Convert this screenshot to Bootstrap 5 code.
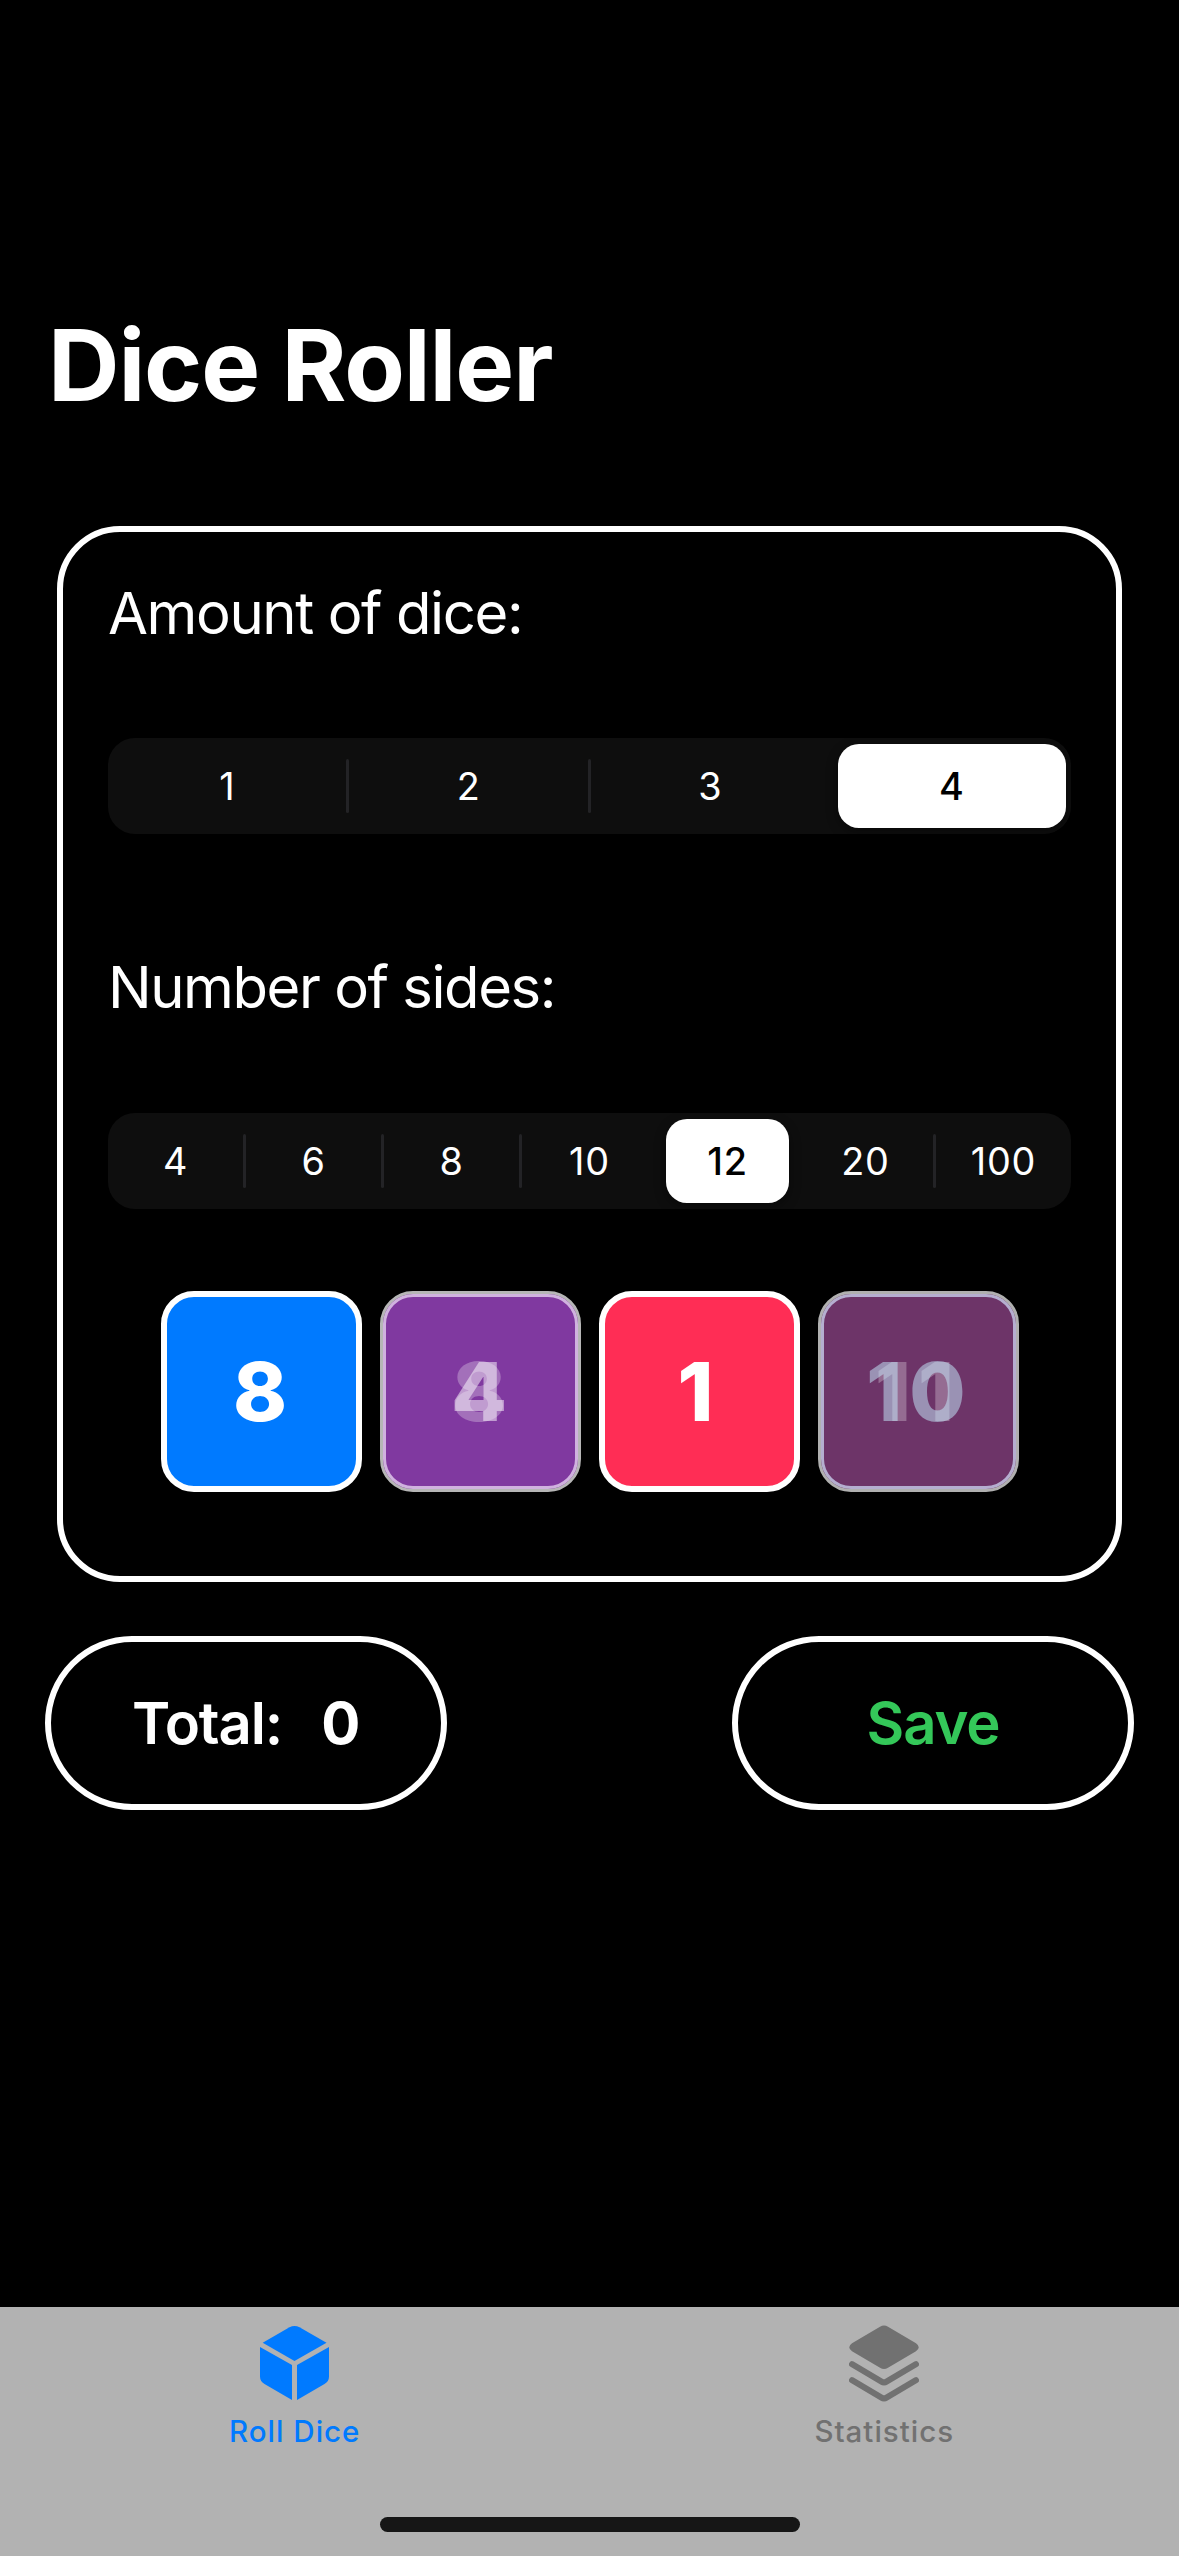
<!DOCTYPE html>
<html lang="en" data-bs-theme="dark">
<head>
<meta charset="utf-8">
<meta name="viewport" content="width=device-width, initial-scale=1">
<title>Dice Roller</title>
<link href="https://cdn.jsdelivr.net/npm/bootstrap@5.3.0/dist/css/bootstrap.min.css" rel="stylesheet">
<style>
body{font-family:Inter,"Liberation Sans",sans-serif;background:#000;color:#fff;height:2556px;overflow:hidden}
.app-title{font-size:99px;font-weight:700;line-height:100px;letter-spacing:-1.1px;padding:315px 0 0 48px;margin:0 0 111px}
.setup-card{margin:0 57px 54px;height:1056px;border:6px solid #fff;border-radius:63px;padding:51px 45px 0}
.field-label{font-size:58px;font-weight:400;line-height:60px;letter-spacing:-1.4px}
.label-sides{letter-spacing:-1.45px;margin-top:123px}
.segments{height:96px;border-radius:27px;background:#0e0e0e;margin-top:95px}
.segments.sides{margin-top:96px}
.track{margin:0 -1.5px;height:96px}
.seg{flex:1 1 0;min-width:0;position:relative;font-size:37.8px;line-height:96px;text-align:center;letter-spacing:.8px}
.split::after{content:"";position:absolute;right:-1px;top:21px;width:3px;height:54px;border-radius:2px;background:#232326}
.seg.active{color:#000;font-weight:500;padding:6px 0}
.thumb{display:block;margin:0 6.75px;background:#fff;line-height:84px;border-radius:21px;box-shadow:0 4px 12px rgba(0,0,0,.4)}
.sides .thumb{margin:0 7.5px}
.dice-row{gap:18px;margin-top:82px}
.die{position:relative;width:201px;height:201px;border:6px solid #fff;border-radius:33px;font-size:81.5px;font-weight:850;line-height:189px;text-align:center;flex:none}
.die-blue{background:#007aff;padding-right:2px}
.die-pink{background:#ff2d55;padding-right:7px}
.die-purple{background:#8039a0;border:3px solid #b6b6b6;box-shadow:inset 0 0 0 3px #d0b2df}
.die-plum{background:#6d3468;border:3px solid #b0b0b0;box-shadow:inset 0 0 0 3px #b5aed0;letter-spacing:7px}
.face{position:absolute;inset:3px}
.die-purple .face{padding-right:2px}
.face-old{color:rgba(255,255,255,.28)}
.face-new{color:rgba(255,255,255,.5)}
.die-plum .face-new{color:rgba(199,240,255,.5);left:6px}
.actions{margin:0 45px}
.pill{width:402px;height:174px;border:6px solid #fff;border-radius:87px;font-size:58px;font-weight:600;letter-spacing:-1.1px}
.total{padding-left:81px}
.total-value{margin-left:39px;font-weight:700}
.save{color:#34c759}
.tabs{height:249px;background:#b2b2b2}
.tab{font-size:29.5px;font-weight:450;line-height:34px;letter-spacing:1px;color:#717171;padding-top:18px}
.tab.current{color:#007aff}
.tab svg{margin-bottom:11px}
.home-bar{width:420px;height:15px;border-radius:8px;background:#161616;margin-bottom:24px}
</style>
</head>
<body class="d-flex flex-column">
<h1 class="app-title">Dice Roller</h1>
<main>
  <section class="setup-card">
    <h2 class="field-label m-0">Amount of dice:</h2>
    <div class="segments">
      <div class="track d-flex">
        <div class="seg split">1</div><div class="seg split">2</div><div class="seg">3</div><div class="seg active"><span class="thumb">4</span></div>
      </div>
    </div>
    <h2 class="field-label label-sides mb-0">Number of sides:</h2>
    <div class="segments sides">
      <div class="track d-flex">
        <div class="seg split">4</div><div class="seg split">6</div><div class="seg split">8</div><div class="seg">10</div><div class="seg active"><span class="thumb">12</span></div><div class="seg split">20</div><div class="seg">100</div>
      </div>
    </div>
    <div class="dice-row d-flex justify-content-center">
      <div class="die die-blue">8</div>
      <div class="die die-purple"><span class="face face-old">8</span><span class="face face-new">4</span></div>
      <div class="die die-pink">1</div>
      <div class="die die-plum"><span class="face face-old">11</span><span class="face face-new">10</span></div>
    </div>
  </section>
  <div class="actions d-flex justify-content-between">
    <div class="pill total d-flex align-items-center"><span>Total:</span><span class="total-value">0</span></div>
    <button type="button" class="btn pill save p-0">Save</button>
  </div>
</main>
<nav class="tabs mt-auto d-flex flex-column justify-content-between align-items-center">
  <div class="d-flex w-100">
    <div class="tab current flex-fill w-50 d-flex flex-column align-items-center">
      <svg width="69" height="78" viewBox="0 -1 69 78" fill="currentColor"><path d="M2.700 16.700 29.500 1.300Q34.500-1.200 39.500 1.300L66.500 16.700 34.500 35Z"/><path d="M0 21 32 39V74L4.500 58Q0 55.500 0 50.500Z"/><path d="M69 21 37 39V74L64.500 58Q69 55.500 69 50.500Z"/></svg>
      <span>Roll Dice</span>
    </div>
    <div class="tab flex-fill w-50 d-flex flex-column align-items-center">
      <svg width="70" height="78" viewBox="0 -.5 70 78" fill="currentColor"><path d="M31 1.200Q35-1.200 39 1.200L67 17.700Q72.500 21.700 67 25.700L39 42.300Q35 44.700 31 42.300L3 25.700Q-2.500 21.700 3 17.700Z"/><path d="M3 38.700 32.500 56.100Q35 57.700 37.500 56.100L67 38.700M3 54.700 32.500 72.100Q35 73.700 37.500 72.100L67 54.700" fill="none" stroke="currentColor" stroke-width="6" stroke-linecap="round"/></svg>
      <span>Statistics</span>
    </div>
  </div>
  <div class="home-bar"></div>
</nav>
</body>
</html>
